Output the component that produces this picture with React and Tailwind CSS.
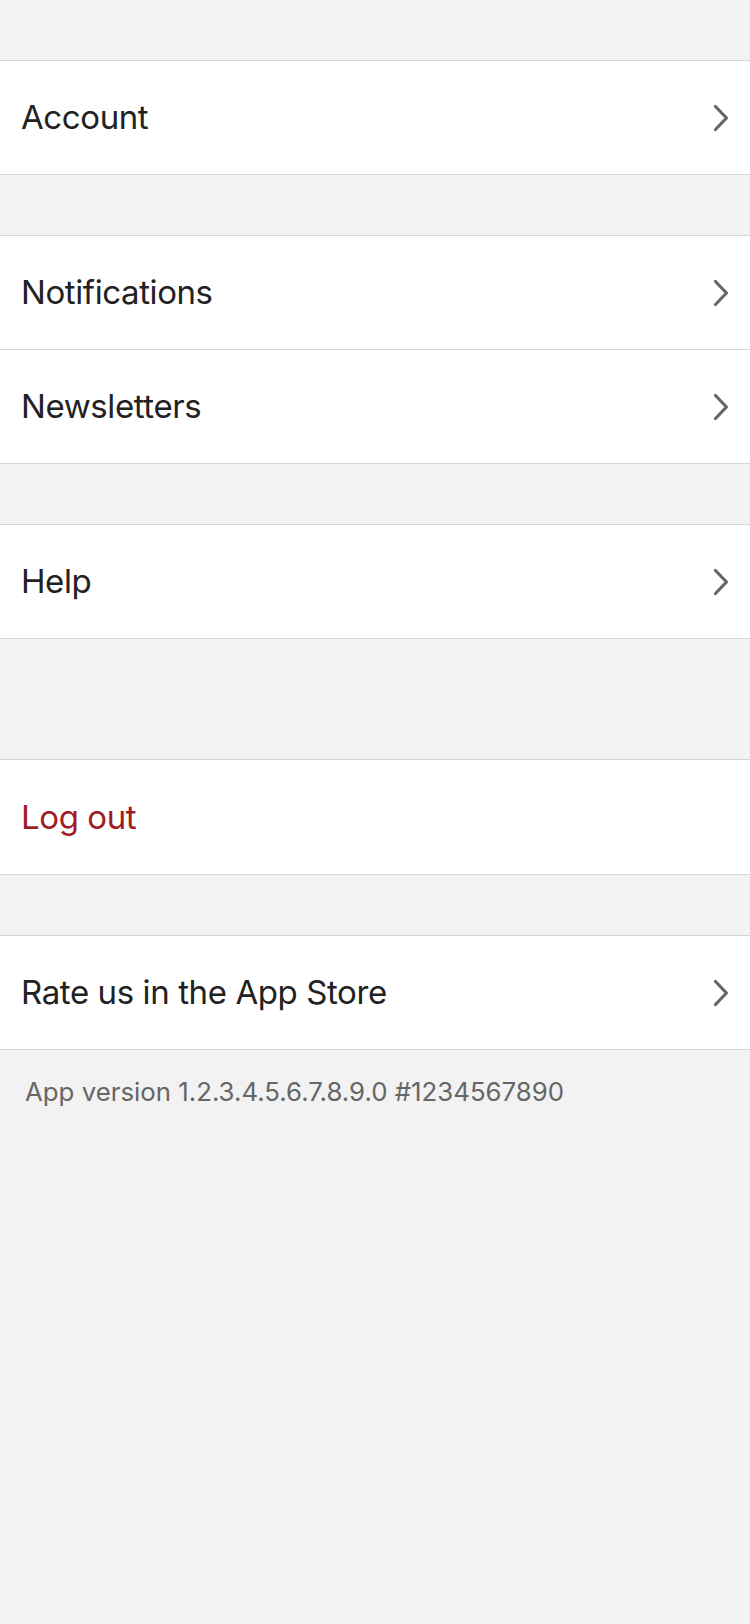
import React from "react";

function Chevron() {
  return (
    <svg width="18" height="30" viewBox="0 0 18 30" fill="none" className="shrink-0">
      <path d="M3.5 3.5 L14.5 15 L3.5 26.5" stroke="#666666" strokeWidth="3.2" strokeLinecap="round" strokeLinejoin="round" />
    </svg>
  );
}

function Row({ label, red, chevron = true, h = "h-[113px]", divider }) {
  return (
    <div className={`${h} flex items-center justify-between pl-[21px] pr-[20px] bg-white ${divider ? "border-t border-[#d6d6d6]" : ""}`}>
      <span className={`text-[33px] leading-none tracking-[-0.4px] ${red ? "text-[#a01c24]" : "text-[#222222]"}`}>{label}</span>
      {chevron && <Chevron />}
    </div>
  );
}

function Section({ children }) {
  return <div className="border-y border-[#d6d6d6] bg-white">{children}</div>;
}

export default function App() {
  return (
    <div className="min-h-[1624px] w-[750px] bg-[#f2f2f2] pt-[60px]" style={{ fontFamily: "Inter, 'Noto Sans', sans-serif" }}>
      <Section>
        <Row label="Account" />
      </Section>
      <div className="h-[60px]" />
      <Section>
        <Row label="Notifications" />
        <Row label="Newsletters" divider h="h-[114px]" />
      </Section>
      <div className="h-[60px]" />
      <Section>
        <Row label="Help" />
      </Section>
      <div className="h-[120px]" />
      <Section>
        <Row label="Log out" red chevron={false} h="h-[114px]" />
      </Section>
      <div className="h-[60px]" />
      <Section>
        <Row label="Rate us in the App Store" />
      </Section>
      <div className="pl-[25px] pt-[29px] text-[25.8px] leading-none text-[#666666]">
        App version 1.2.3.4.5.6.7.8.9.0 #1234567890
      </div>
    </div>
  );
}
